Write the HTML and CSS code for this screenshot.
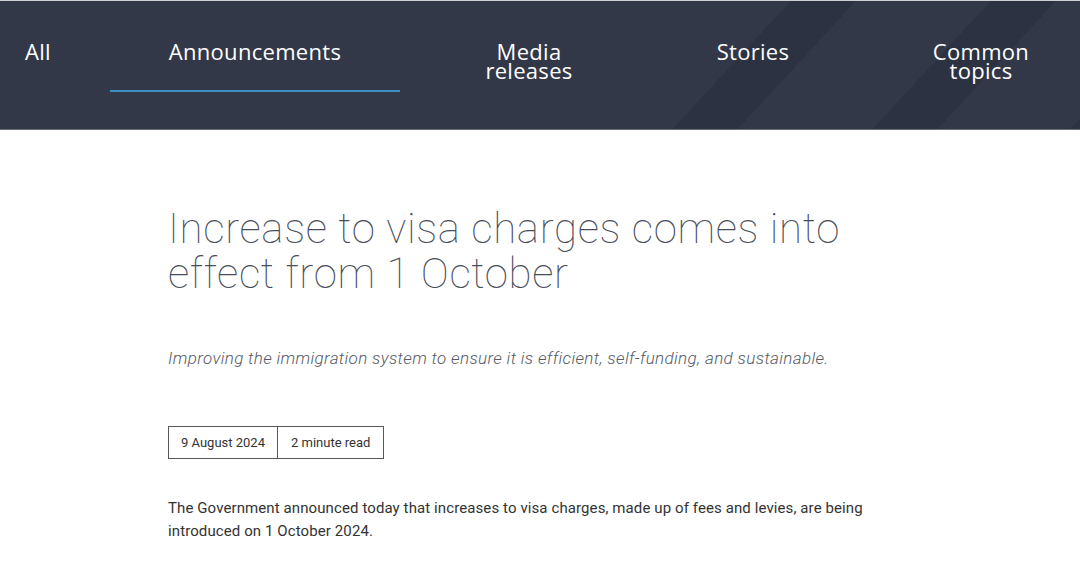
FILE: index.html
```html
<!DOCTYPE html>
<html lang="en">
<head>
<meta charset="utf-8">
<title>Increase to visa charges comes into effect from 1 October</title>
<link rel="stylesheet" href="styles.css">
</head>
<body>
<header class="topbar">
  <nav class="tabs">
    <a class="tab tab-all" href="#">All</a>
    <a class="tab tab-ann is-active" href="#">Announcements</a>
    <a class="tab tab-media" href="#">Media<br>releases</a>
    <a class="tab tab-stories" href="#">Stories</a>
    <a class="tab tab-common" href="#">Common<br>topics</a>
  </nav>
</header>
<main class="article">
  <h1 class="headline">Increase to visa charges comes into effect from 1 October</h1>
  <p class="standfirst">Improving the immigration system to ensure it is efficient, self-funding, and sustainable.</p>
  <div class="meta">
    <span class="meta-cell">9 August 2024</span>
    <span class="meta-cell">2 minute read</span>
  </div>
  <p class="body-text">The Government announced today that increases to visa charges, made up of fees and levies, are being introduced on 1 October 2024.</p>
</main>
</body>
</html>
```
FILE: styles.css
```css
* { box-sizing: border-box; }
html, body { margin: 0; padding: 0; background: #fff; }
body { font-family: Roboto, "Liberation Sans", sans-serif; color: #333; }

.topbar {
  height: 130px;
  border-top: 1px solid #cfcfd2;
  border-bottom: 1px solid #676c7b;
  background-color: #333849;
  background-image: linear-gradient(132.7deg,
    transparent 581px, #2d3242 581px, #2d3242 629px,
    transparent 629px, transparent 728px, #2d3242 728px, #2d3242 776px,
    transparent 776px, transparent 873px, #2d3242 873px);
}

.tabs {
  display: grid;
  grid-template-columns: 110px 290px 258px 190px 1fr;
  height: 100%;
}

.tab {
  font-family: "Open Sans", sans-serif;
  font-weight: 500;
  font-size: 22px;
  letter-spacing: 0.3px;
  line-height: 19px;
  color: #fff;
  text-decoration: none;
  text-align: center;
  padding-top: 41px;
}
.tab-all { text-align: left; padding-left: 25px; }
.tab-common { padding-left: 34px; }
.tab.is-active { position: relative; }
.tab.is-active::after {
  content: "";
  position: absolute;
  left: 0; right: 0;
  top: 89px;
  height: 2px;
  background: #3a8ec2;
}

.article {
  padding: 0 0 0 168px;
  max-width: 900px;
}

.headline {
  margin: 76px 0 0;
  font-family: Roboto, sans-serif;
  font-weight: 100;
  font-size: 42px;
  letter-spacing: 0.65px;
  line-height: 45px;
  color: #474c5a;
  max-width: 700px;
}

.standfirst {
  margin: 51px 0 0;
  font-family: Roboto, sans-serif;
  font-style: italic;
  font-weight: 300;
  font-size: 17px;
  letter-spacing: 0.35px;
  line-height: 22px;
  color: #555a66;
}

.meta {
  display: inline-flex;
  margin-top: 57px;
  border: 1px solid #55585f;
}
.meta-cell {
  font-size: 13px;
  line-height: 31px;
  color: #333;
  padding: 0 12px;
}
.meta-cell + .meta-cell { border-left: 1px solid #55585f; padding: 0 13px; }

.body-text {
  margin: 38px 0 0;
  font-size: 15px;
  letter-spacing: 0.1px;
  line-height: 23px;
  color: #333;
  max-width: 730px;
}
```
